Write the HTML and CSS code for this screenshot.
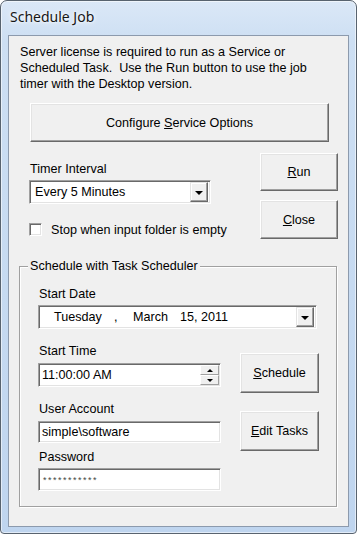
FILE: index.html
```html
<!DOCTYPE html>
<html>
<head>
<meta charset="utf-8">
<title>Schedule Job</title>
<link rel="stylesheet" href="styles.css">
</head>
<body>
<div class="window">
  <div class="titlebar"><span class="title">Schedule Job</span></div>
  <div class="client">
    <p class="intro">Server license is required to run as a Service or<br>Scheduled Task.&nbsp; Use the Run button to use the job<br>timer with the Desktop version.</p>
    <div class="btn btn-config"><span>Configure <u>S</u>ervice Options</span></div>
    <div class="timer-row">
      <div class="timer-left">
        <div class="label">Timer Interval</div>
        <div class="field combo">
          <span class="field-text">Every 5 Minutes</span>
          <span class="drop"><span class="tri"></span></span>
        </div>
        <div class="check"><span class="box"></span><span class="check-text">Stop when input folder is empty</span></div>
      </div>
      <div class="timer-right">
        <div class="btn btn-run"><span><u>R</u>un</span></div>
        <div class="btn btn-close"><span><u>C</u>lose</span></div>
      </div>
    </div>
    <fieldset class="group">
      <legend>Schedule with Task Scheduler</legend>
      <div class="group-inner">
        <div class="label label-date">Start Date</div>
        <div class="field date">
          <span class="d d1">Tuesday</span><span class="d d2">,</span><span class="d d3">March</span><span class="d d4">15, 2011</span>
          <span class="drop"><span class="tri"></span></span>
        </div>
        <div class="sched-row">
          <div class="sched-left">
            <div class="label label-time">Start Time</div>
            <div class="field time">
              <span class="field-text">11:00:00 AM</span>
              <span class="spin">
                <span class="spin-btn"><span class="tri-up"></span></span>
                <span class="spin-btn"><span class="tri-down"></span></span>
              </span>
            </div>
            <div class="label label-user">User Account</div>
            <div class="field user"><span class="field-text">simple\software</span></div>
            <div class="label label-pass">Password</div>
            <div class="field pass"><span class="stars">***********</span></div>
          </div>
          <div class="sched-right">
            <div class="btn btn-sched"><span><u>S</u>chedule</span></div>
            <div class="btn btn-edit"><span><u>E</u>dit Tasks</span></div>
          </div>
        </div>
      </div>
    </fieldset>
  </div>
</div>
</body>
</html>
```
FILE: styles.css
```css
* { box-sizing: border-box; }
html, body { margin: 0; padding: 0; }
body {
  width: 357px;
  height: 534px;
  overflow: hidden;
  background: #ffffff;
  font-family: "Liberation Sans", Arial, sans-serif;
  font-size: 12.6px;
  color: #000;
}
.window {
  width: 357px;
  height: 534px;
  border: 1px solid #58636f;
  border-radius: 7px 7px 4px 4px;
  background: linear-gradient(#dbe8f7 0, #cddff3 40px, #bfd5ef 100%);
  box-shadow: inset 0 0 0 1px rgba(255,255,255,0.55);
  padding: 0 7px 6px 7px;
  display: flex;
  flex-direction: column;
}
.titlebar {
  flex: none;
  height: 34px;
  padding: 7px 0 0 2px;
}
.title {
  font-family: "Noto Sans", "Open Sans", sans-serif;
  font-size: 14px;
  line-height: 18px;
  color: #161616;
  text-shadow: 0 0 6px #fff, 0 0 3px #fff;
}
.client {
  flex: 1;
  border: 1px solid #8c9aad;
  background: #f0f0f0;
}
.intro {
  margin: 8px 0 0 11px;
  line-height: 16px;
  white-space: nowrap;
}
.btn {
  display: flex;
  align-items: center;
  justify-content: center;
  background: #f0f0f0;
  border: 1px solid;
  border-color: #ffffff #696969 #696969 #ffffff;
  box-shadow: inset -1px -1px 0 #a0a0a0, inset 1px 1px 0 #e3e3e3;
  line-height: 14px;
  white-space: nowrap;
}
.btn u { text-underline-offset: 1px; }
.btn-config {
  margin: 11px 0 0 21px;
  width: 299px;
  height: 39px;
}
.timer-row {
  display: flex;
  align-items: flex-start;
}
.timer-left {
  margin-left: 20px;
  width: 182px;
  padding-top: 20px;
}
.label {
  line-height: 14px;
  padding-left: 1px;
}
.field {
  display: flex;
  align-items: center;
  background: #ffffff;
  border: 1px solid;
  border-color: #a0a0a0 #ffffff #ffffff #a0a0a0;
  box-shadow: inset 1px 1px 0 #696969, inset -1px -1px 0 #e3e3e3;
  padding: 2px;
  line-height: 14px;
}
.field-text { padding-left: 1px; white-space: nowrap; }
.combo {
  margin-top: 4px;
  height: 24px;
}
.combo .field-text { padding-left: 3px; }
.drop {
  margin-left: auto;
  width: 18px;
  height: 20px;
  display: flex;
  align-items: center;
  justify-content: center;
  background: #f0f0f0;
  border: 1px solid;
  border-color: #e3e3e3 #696969 #696969 #e3e3e3;
  box-shadow: inset -1px -1px 0 #a0a0a0, inset 1px 1px 0 #ffffff;
}
.tri {
  width: 0;
  height: 0;
  border-left: 4px solid transparent;
  border-right: 4px solid transparent;
  border-top: 4px solid #000;
  margin-top: 1px;
}
.check {
  margin-top: 19px;
  display: flex;
  align-items: center;
  gap: 9px;
  height: 13px;
  line-height: 14px;
}
.box {
  flex: none;
  width: 13px;
  height: 13px;
  background: #fff;
  border: 1px solid;
  border-color: #a0a0a0 #ffffff #ffffff #a0a0a0;
  box-shadow: inset 1px 1px 0 #696969, inset -1px -1px 0 #e3e3e3;
}
.check-text { white-space: nowrap; }
.timer-right {
  margin-left: auto;
  margin-right: 10px;
  padding-top: 11px;
  display: flex;
  flex-direction: column;
  gap: 9px;
}
.btn-run { width: 78px; height: 38px; }
.btn-close { width: 78px; height: 39px; }

.group {
  margin: 20px 0 0 10px;
  width: 318px;
  padding: 0;
  border: 1px solid #a0a0a0;
  box-shadow: inset 1px 1px 0 #ffffff, 1px 1px 0 #ffffff;
  min-width: 0;
}
.group legend {
  margin-left: 8px;
  padding: 0 2px;
  line-height: 14px;
  background: #f0f0f0;
}
.group-inner {
  padding: 0 0 15px 18px;
}
.label-date { margin-top: 14px; }
.date {
  margin-top: 4px;
  width: 279px;
  height: 24px;
}
.d { display: inline-block; white-space: nowrap; }
.d1 { width: 60px; padding-left: 13px; box-sizing: content-box; }
.d2 { width: 19px; }
.d3 { width: 47px; }
.d4 { width: 60px; }
.sched-row {
  display: flex;
  align-items: flex-start;
}
.sched-left { width: 183px; }
.label-time { margin-top: 15px; }
.time {
  margin-top: 5px;
  height: 24px;
  padding-right: 1px;
}
.spin {
  margin-left: auto;
  width: 19px;
  height: 20px;
  display: flex;
  flex-direction: column;
}
.spin-btn {
  flex: 1;
  display: flex;
  align-items: center;
  justify-content: center;
  background: #f0f0f0;
  border: 1px solid;
  border-color: #ffffff #a0a0a0 #a0a0a0 #ffffff;
}
.tri-up {
  width: 0; height: 0;
  border-left: 3px solid transparent;
  border-right: 3px solid transparent;
  border-bottom: 3px solid #000;
}
.tri-down {
  width: 0; height: 0;
  border-left: 3px solid transparent;
  border-right: 3px solid transparent;
  border-top: 3px solid #000;
}
.label-user { margin-top: 15px; }
.user {
  margin-top: 5px;
  height: 22px;
}
.label-pass { margin-top: 7px; }
.pass {
  margin-top: 4px;
  height: 23px;
}
.stars {
  padding-left: 2px;
  font-size: 9px;
  line-height: 10px;
  letter-spacing: 1.5px;
  color: #444;
}
.sched-right {
  margin-left: 19px;
  display: flex;
  flex-direction: column;
}
.btn-sched { margin-top: 24px; width: 79px; height: 40px; }
.btn-edit { margin-top: 18px; width: 79px; height: 40px; }
```
